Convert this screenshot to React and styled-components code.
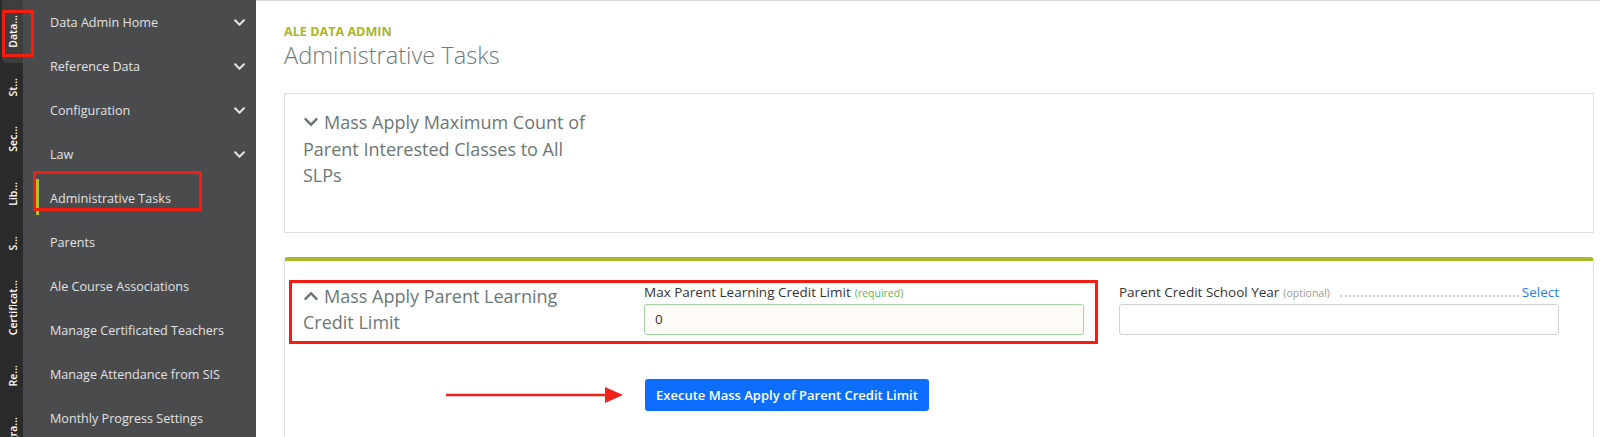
import styled, { createGlobalStyle } from "styled-components";
import { FaChevronDown, FaChevronUp } from "react-icons/fa";

const GlobalStyle = createGlobalStyle`
  body {
    margin: 0;
    font-family: "Open Sans", "Liberation Sans", sans-serif;
    background: #fff;
  }
`;

const railTabs = ["Data...", "St...", "Sec...", "Lib...", "S...", "Certificat...", "Re...", "Progra..."];

const navItems = [
  { label: "Data Admin Home", caret: true },
  { label: "Reference Data", caret: true },
  { label: "Configuration", caret: true },
  { label: "Law", caret: true },
  { label: "Administrative Tasks", active: true },
  { label: "Parents" },
  { label: "Ale Course Associations" },
  { label: "Manage Certificated Teachers" },
  { label: "Manage Attendance from SIS" },
  { label: "Monthly Progress Settings" },
];

const App = () => {
  return (
    <Page>
      <GlobalStyle />
      <Rail>
        {railTabs.map((t, i) => (
          <RailTab key={t} $active={i === 0}>
            <RailLabel>{t}</RailLabel>
            {i === 0 && <RailMark />}
          </RailTab>
        ))}
      </Rail>

      <Sidebar>
        {navItems.map((item) => (
          <NavItem key={item.label} $active={item.active}>
            {item.label}
            {item.caret && <FaChevronDown size={13} />}
            {item.active && <NavMark />}
          </NavItem>
        ))}
      </Sidebar>

      <Main>
        <Eyebrow>ALE DATA ADMIN</Eyebrow>
        <Title>Administrative Tasks</Title>

        <Card>
          <TaskTitle>
            <FaChevronDown size={16} />
            Mass Apply Maximum Count of Parent Interested Classes to All SLPs
          </TaskTitle>
        </Card>

        <Card $open>
          <FormRow>
            <TaskTitle>
              <FaChevronUp size={16} />
              Mass Apply Parent Learning Credit Limit
            </TaskTitle>
            <Field>
              <Label>
                Max Parent Learning Credit Limit <Hint $tone="required">(required)</Hint>
              </Label>
              <Input $valid defaultValue="0" />
            </Field>
            <Field>
              <Label>
                Parent Credit School Year <Hint>(optional)</Hint>
                <Leader />
                <SelectLink>Select</SelectLink>
              </Label>
              <Input defaultValue="" />
            </Field>
            <RowMark />
          </FormRow>

          <ButtonRow>
            <svg width="177" height="18" viewBox="0 0 177 18">
              <line x1="0" y1="9" x2="162" y2="9" stroke="#f2231a" strokeWidth="2.5" />
              <polygon points="159,1 177,9 159,17" fill="#f2231a" />
            </svg>
            <ExecuteButton>Execute Mass Apply of Parent Credit Limit</ExecuteButton>
          </ButtonRow>
        </Card>
      </Main>
    </Page>
  );
};

const Page = styled.div`
  display: flex;
  height: 100vh;
  overflow: hidden;
`;

const Rail = styled.div`
  width: 23px;
  flex-shrink: 0;
  background: #2a2a2a;
  display: flex;
  flex-direction: column;
  position: relative;
  z-index: 2;
`;

const RailTab = styled.div`
  position: relative;
  display: flex;
  justify-content: center;
  padding: 15px 0;
  margin-left: 2px;
  background: ${({ $active }) => ($active ? "#3e3e3f" : "transparent")};
  border-radius: 0 0 0 5px;
`;

const RailLabel = styled.span`
  writing-mode: vertical-rl;
  transform: rotate(180deg);
  color: #fff;
  font-size: 10.5px;
  font-weight: 600;
  white-space: nowrap;
`;

const RailMark = styled.div`
  position: absolute;
  left: 0;
  top: 10px;
  width: 32px;
  height: 47px;
  border: 3px solid #f31d12;
  box-sizing: border-box;
`;

const Sidebar = styled.nav`
  width: 233px;
  flex-shrink: 0;
  background: #4a4b4d;
  display: flex;
  flex-direction: column;
`;

const NavItem = styled.div`
  position: relative;
  height: 44px;
  flex-shrink: 0;
  display: flex;
  align-items: center;
  justify-content: space-between;
  padding: 0 10px 0 27px;
  color: #e2e2e2;
  font-size: 12.6px;

  &::before {
    content: "";
    display: ${({ $active }) => ($active ? "block" : "none")};
    position: absolute;
    left: 13px;
    top: 3px;
    bottom: 5px;
    width: 3px;
    background: #b3bf2c;
  }
`;

const NavMark = styled.div`
  position: absolute;
  left: 10px;
  top: -5px;
  width: 169px;
  height: 40px;
  border: 3px solid #f31d12;
  box-sizing: border-box;
`;

const Main = styled.main`
  flex: 1;
  border-top: 1px solid #dcdcdc;
  padding: 23px 8px 0 28px;
  display: flex;
  flex-direction: column;
`;

const Eyebrow = styled.div`
  color: #a9b71e;
  font-size: 12.6px;
  font-weight: 700;
  line-height: 16px;
`;

const Title = styled.h1`
  margin: 0 0 23px;
  color: #6e7a7a;
  font-size: 23.6px;
  font-weight: 300;
  line-height: 30px;
`;

const Card = styled.section`
  border: 1px solid #dedede;
  border-top: ${({ $open }) => ($open ? "4px solid #aab82b" : "1px solid #dedede")};
  border-radius: ${({ $open }) => ($open ? "4px 4px 0 0" : "0")};
  padding: ${({ $open }) => ($open ? "22px 34px 40px 18px" : "15px 34px 43px 18px")};
  margin-bottom: 24px;
  flex-shrink: 0;
`;

const TaskTitle = styled.h3`
  margin: 0;
  max-width: 288px;
  color: #6b7777;
  font-size: 18px;
  font-weight: 400;
  line-height: 26.5px;

  svg {
    margin-right: 5px;
    vertical-align: -1px;
  }
`;

const FormRow = styled.div`
  position: relative;
  display: grid;
  grid-template-columns: 306px 440px 440px;
  column-gap: 35px;
  align-items: start;
`;

const RowMark = styled.div`
  position: absolute;
  left: -14px;
  top: -3px;
  width: 809px;
  height: 64px;
  border: 3px solid #f31d12;
  box-sizing: border-box;
`;

const Field = styled.div`
  display: flex;
  flex-direction: column;
  gap: 1px;
`;

const Label = styled.label`
  display: flex;
  align-items: baseline;
  color: #333;
  font-size: 13.5px;
  line-height: 19px;
  white-space: nowrap;
`;

const Hint = styled.span`
  margin-left: 4px;
  font-size: 10.5px;
  color: ${({ $tone }) => ($tone === "required" ? "#5cb85c" : "#9a9a9a")};
`;

const Leader = styled.span`
  flex: 1;
  margin: 0 3px 0 10px;
  border-bottom: 2px dotted #cfcfcf;
`;

const SelectLink = styled.a`
  color: #1a7ff2;
  font-size: 13.5px;
  cursor: pointer;
`;

const Input = styled.input`
  box-sizing: border-box;
  height: 31px;
  padding: 0 10px;
  border: 1px solid ${({ $valid }) => ($valid ? "#a3d4a0" : "#cfd3d6")};
  border-radius: 3px;
  background: ${({ $valid }) => ($valid ? "#fdfcf6" : "#fff")};
  font-family: inherit;
  font-size: 13.5px;
  color: #333;
`;

const ButtonRow = styled.div`
  display: flex;
  align-items: center;
  gap: 22px;
  margin-top: 43px;
  padding-left: 143px;
`;

const ExecuteButton = styled.button`
  height: 32px;
  width: 284px;
  border: none;
  border-radius: 3px;
  background: #0d6efd;
  color: #fff;
  font-family: inherit;
  font-size: 13px;
  font-weight: 600;
`;

export default App;
